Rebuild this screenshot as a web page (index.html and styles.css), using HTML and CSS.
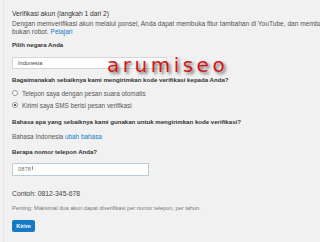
FILE: index.html
```html
<!DOCTYPE html>
<html lang="id">
<head>
    <meta charset="UTF-8">
    <meta name="viewport" content="width=device-width, initial-scale=1.0">
    <title>Verifikasi akun</title>
    <link rel="stylesheet" href="styles.css">
</head>
<body>

    <div class="page">
        <h1 class="title">Verifikasi akun (langkah 1 dari 2)</h1>
        <p class="intro">Dengan memverifikasi akun melalui ponsel, Anda dapat membuka fitur tambahan di YouTube, dan membantu memastikan Anda<br>bukan robot. <a href="#">Pelajari</a></p>

        <!-- negara -->
        <div class="label label-country">Pilih negara Anda</div>
        <div class="select-box">Indonesia</div>

        <!-- cara pengiriman -->
        <div class="label label-method">Bagaimanakah sebaiknya kami mengirimkan kode verifikasi kepada Anda?</div>
        <div class="radios">
            <label class="radio-row"><span class="radio"></span>Telepon saya dengan pesan suara otomatis</label>
            <label class="radio-row"><span class="radio checked"></span>Kirimi saya SMS berisi pesan verifikasi</label>
        </div>

        <div class="label label-lang">Bahasa apa yang sebaiknya kami gunakan untuk mengirimkan kode verifikasi?</div>
        <div class="lang">Bahasa Indonesia <a href="#">ubah bahasa</a></div>

        <!-- nomor telepon -->
        <div class="label label-phone">Berapa nomor telepon Anda?</div>
        <div class="phone-input">0878<span class="caret"></span></div>
        <div class="example">Contoh: 0812-345-678</div>
        <div class="note">Penting: Maksimal dua akun dapat diverifikasi per nomor telepon, per tahun.</div>

        <button class="submit">Kirim</button>

        <div class="watermark">arumiseo</div>
    </div>

</body>
</html>
```

FILE: styles.css
```css
* {
    margin: 0;
    padding: 0;
    box-sizing: border-box;
}

body {
    font-family: 'Liberation Sans', Arial, sans-serif;
    background: #f1f1f1;
    color: #333;
    overflow: hidden;
    height: 242px;
}

.page {
    position: relative;
    margin-left: 3px;
    border-left: 1px solid #e5e5e5;
    padding: 9px 0 0 8px;
    height: 242px;
    white-space: nowrap;
}

a {
    color: #167ac6;
    text-decoration: none;
}

.title {
    font-size: 6.7px;
    font-weight: normal;
    line-height: 10px;
    color: #333;
}

.intro {
    margin-top: 1px;
    font-size: 6.6px;
    line-height: 8px;
    color: #555;
}

.label {
    font-size: 6.1px;
    font-weight: bold;
    line-height: 10px;
    color: #333;
}

.label-country { margin-top: 4px; }
.label-method  { margin-top: 6px; }
.label-lang    { margin-top: 6px; }
.label-phone   { margin-top: 5px; }

.select-box {
    margin-top: 7px;
    width: 155px;
    height: 12px;
    background: #fff;
    border: 1px solid #d6d6d6;
    font-size: 5.6px;
    line-height: 10px;
    padding-left: 5px;
    color: #444;
}

/* pilihan radio */
.radios {
    margin-top: 2px;
}

.radio-row {
    display: flex;
    align-items: center;
    height: 12px;
    font-size: 6.4px;
    color: #555;
}

.radio {
    width: 6px;
    height: 6px;
    border: 1px solid #999;
    border-radius: 50%;
    background: #fff;
    margin-right: 4px;
    display: flex;
    align-items: center;
    justify-content: center;
}

.radio.checked::after {
    content: '';
    width: 2px;
    height: 2px;
    border-radius: 50%;
    background: #333;
}

.lang {
    margin-top: 5px;
    font-size: 6.4px;
    line-height: 10px;
    color: #555;
}

.phone-input {
    margin-top: 6px;
    width: 137px;
    height: 13px;
    background: #fff;
    border: 1px solid #bccbd8;
    font-size: 5.8px;
    line-height: 11px;
    padding-left: 5px;
    color: #777;
    display: flex;
    align-items: center;
}

.caret {
    width: 1px;
    height: 4px;
    background: #999;
    margin-left: 1px;
    margin-top: -3px;
}

.example {
    margin-top: 13px;
    font-size: 6.8px;
    line-height: 10px;
    color: #444;
}

.note {
    margin-top: 4px;
    font-size: 5.6px;
    line-height: 10px;
    color: #777;
}

.submit {
    display: block;
    margin-top: 7px;
    width: 23px;
    height: 12px;
    background: #167ac6;
    border: none;
    border-radius: 2px;
    color: #fff;
    font-family: 'Liberation Sans', Arial, sans-serif;
    font-size: 5.6px;
    font-weight: bold;
}

/* tanda air di atas konten */
.watermark {
    position: absolute;
    left: 103px;
    top: 53px;
    font-family: 'DejaVu Sans', sans-serif;
    font-size: 20px;
    line-height: 24px;
    letter-spacing: 3.5px;
    color: #d01818;
    text-shadow: 2px 2px 3px rgba(60, 60, 60, 0.75);
}
```
